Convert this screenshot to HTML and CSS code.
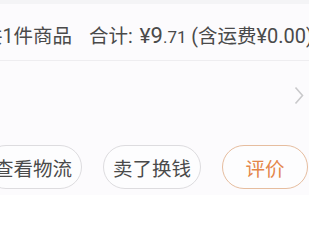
FILE: index.html
```html
<!DOCTYPE html>
<html lang="zh">
<head>
<meta charset="utf-8">
<link rel="stylesheet" href="styles.css">
</head>
<body>
<div class="card">
  <div class="summary">
    <span class="summary-text">共<span class="num">1</span>件商品<span class="sp"></span>合计<span class="num">: </span><span class="price"><span class="num yuan">¥</span><span class="num big">9</span><span class="num small">.71</span></span><span class="num"> (</span>含运费<span class="num fee">¥0.00)</span></span>
  </div>
  <div class="info-row">
    <svg class="chev" width="10" height="19" viewBox="0 0 10 19"><path d="M1.5 1.5 L8.5 9.5 L1.5 17.5" fill="none" stroke="#c9c9cb" stroke-width="1.6"/></svg>
  </div>
  <div class="actions">
    <span class="btn">查看物流</span>
    <span class="btn">卖了换钱</span>
    <span class="btn btn-primary">评价</span>
  </div>
</div>
</body>
</html>
```
FILE: styles.css
```css
html, body {
  margin: 0;
  padding: 0;
  background: #ffffff;
}
body {
  width: 320px;
  height: 240px;
  overflow: hidden;
  font-family: "Noto Sans CJK SC", "Noto Sans", sans-serif;
  color: #4a4a4a;
}
.card {
  width: 309px;
  height: 195px;
  background: #fcfbfd;
  border-top: 4px solid #f4f4f6;
  box-sizing: border-box;
  overflow: hidden;
  display: flex;
  flex-direction: column;
}
.summary {
  height: 57px;
  display: flex;
  justify-content: flex-end;
  align-items: center;
  padding-top: 4px;
  box-sizing: border-box;
  border-bottom: 1px solid #eeedf0;
  white-space: nowrap;
  overflow: hidden;
  flex-shrink: 0;
}
.summary-text {
  font-size: 19.5px;
  margin-right: -4px;
  flex-shrink: 0;
}
.num {
  font-family: Roboto, "Noto Sans", sans-serif;
}
.sp {
  display: inline-block;
  width: 17px;
}
.yuan {
  font-size: 21px;
  margin-left: 2px;
}
.big {
  font-size: 22px;
}
.small {
  font-size: 17px;
}
.fee {
  font-size: 20px;
}
.info-row {
  height: 69px;
  display: flex;
  justify-content: flex-end;
  align-items: center;
  padding-right: 5px;
  box-sizing: border-box;
  flex-shrink: 0;
}
.actions {
  display: flex;
  justify-content: flex-end;
  gap: 21px;
  padding-top: 15px;
  padding-right: 1px;
  overflow: hidden;
  flex-shrink: 0;
}
.btn {
  flex-shrink: 0;
  width: 98px;
  height: 44px;
  box-sizing: border-box;
  border: 1px solid #dddcdf;
  border-radius: 22px;
  display: flex;
  align-items: center;
  justify-content: center;
  font-size: 19.5px;
  color: #4a4a4a;
  background: #fdfdfe;
}
.btn-primary {
  width: 86px;
  border-color: #e6bd9f;
  color: #e4864a;
}
```
